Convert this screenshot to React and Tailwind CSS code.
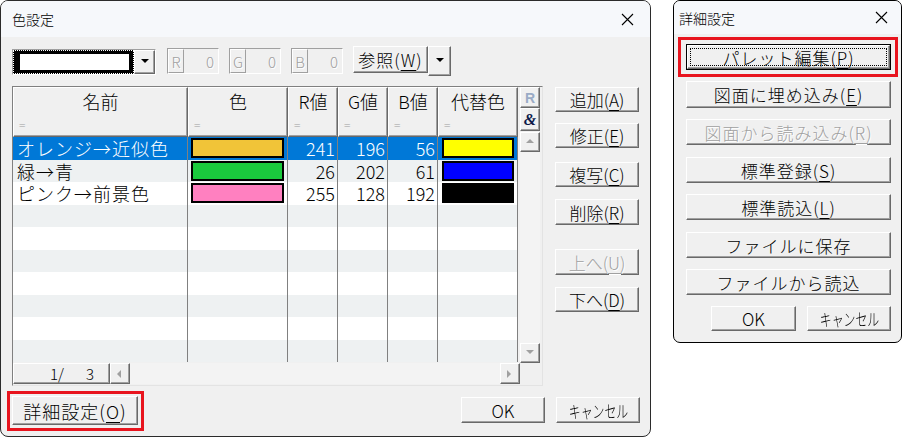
import React from "react";

const RAISED =
  "bg-[#f0f0f0] border border-t-white border-l-white border-r-[#696969] border-b-[#696969] shadow-[inset_-1px_-1px_0_#a0a0a0]";
const SUNKEN =
  "border border-t-[#a0a0a0] border-l-[#a0a0a0] border-r-white border-b-white";

const rows = [
  { name: "オレンジ→近似色", color: "#f1c438", r: 241, g: 196, b: 56, alt: "#ffff00", selected: true },
  { name: "緑→青", color: "#1aca3d", r: 26, g: 202, b: 61, alt: "#0000ff" },
  { name: "ピンク→前景色", color: "#ff80c0", r: 255, g: 128, b: 192, alt: "#000000" },
];

const emptyRows = [3, 4, 5, 6, 7, 8, 9];

function Btn({ children, className = "", disabled = false }) {
  return (
    <div
      className={`${RAISED} flex items-center justify-center text-[17px] leading-none whitespace-nowrap ${
        disabled ? "text-[#a0a0a0] [text-shadow:1px_1px_0_#ffffff]" : "text-black"
      } ${className}`}
    >
      {children}
    </div>
  );
}

function Key({ children }) {
  return <span className="underline underline-offset-[3px] decoration-1">{children}</span>;
}

// narrow katakana label like the original half-width font
function Cancel() {
  return <span className="inline-block scale-x-[0.7] text-[17px] leading-none">キャンセル</span>;
}

function CloseIcon() {
  return (
    <svg width="13" height="13" viewBox="0 0 13 13">
      <path d="M1 1 L12 12 M12 1 L1 12" stroke="#000" strokeWidth="1.1" fill="none" />
    </svg>
  );
}

function Arrow({ dir, color = "#a0a0a0" }) {
  const pts = {
    up: "0,5 4,1 8,5",
    down: "0,1 8,1 4,5",
    left: "5,0 5,8 1,4",
    right: "1,0 1,8 5,4",
  };
  return (
    <svg width="8" height="8" viewBox="0 0 8 8">
      <polygon points={pts[dir]} fill={color} />
    </svg>
  );
}

function HeadCell({ w, label }) {
  return (
    <div className={`${w} h-full ${RAISED} flex flex-col px-[5px]`}>
      <div className="h-[26px] flex items-center justify-center text-[18px] leading-none whitespace-nowrap">
        {label}
      </div>
      <div className="mt-[5px] text-[12px] leading-none text-[#a0a0a0]">=</div>
    </div>
  );
}

function RgbBox({ label }) {
  return (
    <div className={`${SUNKEN} w-[52px] h-[26px] flex items-center bg-[#f0f0f0]`}>
      <div className="w-[16px] h-full border border-t-white border-l-white border-r-[#a0a0a0] border-b-[#a0a0a0] flex items-center justify-center text-[15px] leading-none text-[#a0a0a0] [text-shadow:1px_1px_0_#ffffff]">
        {label}
      </div>
      <div className="flex-1 text-right pr-[4px] text-[15px] leading-none text-[#a0a0a0] [text-shadow:1px_1px_0_#ffffff]">
        0
      </div>
    </div>
  );
}

function DataRow({ row, index }) {
  const bg = row.selected ? "bg-[#0078d7] text-white" : index % 2 === 1 ? "bg-[#eef1f2]" : "bg-white";
  return (
    <div className={`flex h-[22.5px] ${bg}`}>
      <div className="w-[175px] border-r border-[#808080] pl-[4px] flex items-center text-[18px] leading-[18px] tracking-[1px] whitespace-nowrap">
        {row.name}
      </div>
      <div className="w-[100px] border-r border-[#808080] flex items-center pl-[3px]">
        <div className="w-[93px] h-[20px] border-2 border-black" style={{ background: row.color }} />
      </div>
      <div className="w-[50px] border-r border-[#808080] flex items-center justify-end pr-[2px] text-[18px] leading-[18px]">
        {row.r}
      </div>
      <div className="w-[50px] border-r border-[#808080] flex items-center justify-end pr-[2px] text-[18px] leading-[18px]">
        {row.g}
      </div>
      <div className="w-[50px] border-r border-[#808080] flex items-center justify-end pr-[2px] text-[18px] leading-[18px]">
        {row.b}
      </div>
      <div className="w-[80px] border-r border-[#808080] flex items-center pl-[4px]">
        <div className="w-[72px] h-[20px] border-2 border-black" style={{ background: row.alt }} />
      </div>
    </div>
  );
}

function EmptyRow({ index }) {
  const bg = index % 2 === 1 ? "bg-[#eef1f2]" : "bg-white";
  return (
    <div className={`flex h-[22.5px] ${bg}`}>
      <div className="w-[175px] border-r border-[#808080]" />
      <div className="w-[100px] border-r border-[#808080]" />
      <div className="w-[50px] border-r border-[#808080]" />
      <div className="w-[50px] border-r border-[#808080]" />
      <div className="w-[50px] border-r border-[#808080]" />
      <div className="w-[80px] border-r border-[#808080]" />
    </div>
  );
}

function MainDialog() {
  return (
    <div className="w-[651px] h-[437px] shrink-0 border border-[#2b2b2b] rounded-[8px] overflow-hidden bg-[#f0f0f0] flex flex-col">
      {/* Title bar */}
      <div className="h-[36px] bg-[#f6f8fb] flex items-center justify-between pl-[11px] pr-[16px]">
        <span className="text-[14px] leading-none">色設定</span>
        <CloseIcon />
      </div>

      <div className="pl-[11px] pr-[10px]">
        {/* Toolbar */}
        <div className="mt-[9px] h-[30px] flex items-start">
          <div className={`${SUNKEN} mt-[3px] w-[144px] h-[26px] flex items-stretch bg-white`}>
            <div className="w-[121px] bg-black border border-dotted border-white p-[3px] pl-[6px] pr-[4px]">
              <div className="w-full h-full bg-white" />
            </div>
            <div className={`${RAISED} flex-1 flex items-center justify-center`}>
              <Arrow dir="down" color="#000" />
            </div>
          </div>
          <div className="ml-[11px] mt-[2px]">
            <RgbBox label="R" />
          </div>
          <div className="ml-[10px] mt-[2px]">
            <RgbBox label="G" />
          </div>
          <div className="ml-[10px] mt-[2px]">
            <RgbBox label="B" />
          </div>
          <Btn className="ml-[10px] w-[75px] h-[27px] tracking-[1px]">
            参照(<Key>W</Key>)
          </Btn>
          <div className={`${RAISED} w-[23px] h-[30px] flex items-center justify-center`}>
            <Arrow dir="down" color="#000" />
          </div>
        </div>

        {/* Table + side buttons */}
        <div className="mt-[10px] flex items-start">
          <div className="w-[531px] h-[300px] border border-t-[#808080] border-l-[#808080] border-r-[#e3e3e3] border-b-[#e3e3e3] bg-[#f0f0f0] flex flex-col">
            <div className="flex h-[276px]">
              <div className="w-[507px] flex flex-col">
                <div className="flex h-[50px] w-[505px]">
                  <HeadCell w="w-[175px]" label="名前" />
                  <HeadCell w="w-[100px]" label="色" />
                  <HeadCell w="w-[50px]" label="R値" />
                  <HeadCell w="w-[50px]" label="G値" />
                  <HeadCell w="w-[50px]" label="B値" />
                  <HeadCell w="w-[80px]" label="代替色" />
                </div>
                <div className="w-[505px] flex flex-col">
                  {rows.map((row, i) => (
                    <DataRow key={i} row={row} index={i} />
                  ))}
                  {emptyRows.map((i) => (
                    <EmptyRow key={i} index={i} />
                  ))}
                </div>
              </div>
              <div className="w-[20px] flex flex-col">
                <div className={`${RAISED} h-[21px] flex items-center justify-center font-['Liberation_Sans',sans-serif] font-bold text-[14px] leading-none text-[#9aabc6]`}>
                  R
                </div>
                <div className={`${RAISED} h-[23px] flex items-center justify-center font-['Liberation_Serif',serif] font-bold italic text-[16px] leading-none text-[#0c1a4a]`}>
                  &amp;
                </div>
                <div className={`${RAISED} mt-[1px] h-[20px] flex items-center justify-center`}>
                  <Arrow dir="up" />
                </div>
                <div className="flex-1 bg-[#f3f3f3]" />
                <div className={`${RAISED} h-[20px] flex items-center justify-center`}>
                  <Arrow dir="down" />
                </div>
              </div>
            </div>
            <div className="flex h-[21px] w-[507px]">
              <div className={`${RAISED} w-[97px] flex items-center pl-[36px] text-[15px] leading-none`}>
                <span>1/</span>
                <span className="ml-[22px]">3</span>
              </div>
              <div className={`${RAISED} w-[20px] flex items-center justify-center`}>
                <Arrow dir="left" />
              </div>
              <div className="flex-1 bg-[#f3f3f3]" />
              <div className={`${RAISED} w-[20px] flex items-center justify-center`}>
                <Arrow dir="right" />
              </div>
            </div>
          </div>

          <div className="ml-[12px] w-[84px] flex flex-col">
            <Btn className="mt-[1px] h-[25px]">
              追加(<Key>A</Key>)
            </Btn>
            <Btn className="mt-[11px] h-[25px]">
              修正(<Key>E</Key>)
            </Btn>
            <Btn className="mt-[14px] h-[25px]">
              複写(<Key>C</Key>)
            </Btn>
            <Btn className="mt-[12px] h-[26px]">
              削除(<Key>R</Key>)
            </Btn>
            <Btn className="mt-[24px] h-[26px]" disabled>
              上へ(<Key>U</Key>)
            </Btn>
            <Btn className="mt-[12px] h-[25px]">
              下へ(<Key>D</Key>)
            </Btn>
          </div>
        </div>

        {/* Bottom buttons */}
        <div className="mt-[5px] flex items-center">
          <div className="-ml-[5px] border-[3px] border-[#e8141e] pt-[2px] pb-[3px] pl-[2px] pr-[3px]">
            <Btn className="w-[126px] h-[29px] text-[18px] tracking-[1px]">
              詳細設定(<Key>O</Key>)
            </Btn>
          </div>
          <div className="flex-1" />
          <Btn className="w-[84px] h-[26px] -mt-[2px]">OK</Btn>
          <Btn className="ml-[11px] w-[84px] h-[26px] -mt-[2px]">
            <Cancel />
          </Btn>
        </div>
      </div>
    </div>
  );
}

function DetailDialog() {
  return (
    <div className="ml-[22px] w-[229px] h-[343px] shrink-0 border border-black rounded-[7px] overflow-hidden bg-[#f0f0f0] flex flex-col">
      <div className="h-[33px] bg-[#f6f8fb] flex items-center justify-between pl-[5px] pr-[13px]">
        <span className="text-[14px] leading-none">詳細設定</span>
        <CloseIcon />
      </div>
      <div className="pl-[4px] pr-[2px] flex flex-col">
        <div className="mt-[3px] w-[220px] border-[3px] border-[#e8141e] pt-[4px] pb-[4px] pl-[5px] pr-[4px]">
          <div className="h-[26px] border border-black">
            <div className={`${RAISED} h-full p-[2px] border-t-white`}>
              <div className="h-full border border-dotted border-black flex items-center justify-center text-[17px] leading-none tracking-[1px]">
                パレット編集(<Key>P</Key>)
              </div>
            </div>
          </div>
        </div>
        <div className="pl-[8px] flex flex-col">
          <Btn className="mt-[4px] w-[205px] h-[27px] tracking-[1px]">
            図面に埋め込み(<Key>E</Key>)
          </Btn>
          <Btn className="mt-[11px] w-[205px] h-[26px] tracking-[1px]" disabled>
            図面から読み込み(<Key>R</Key>)
          </Btn>
          <Btn className="mt-[12px] w-[205px] h-[26px] tracking-[1px]">
            標準登録(<Key>S</Key>)
          </Btn>
          <Btn className="mt-[11px] w-[205px] h-[26px] tracking-[1px]">
            標準読込(<Key>L</Key>)
          </Btn>
          <Btn className="mt-[12px] w-[205px] h-[26px] tracking-[1px]">
            ファイルに保存
          </Btn>
          <Btn className="mt-[11px] w-[205px] h-[26px] tracking-[1px]">
            ファイルから読込
          </Btn>
          <div className="mt-[11px] flex">
            <Btn className="ml-[25px] w-[85px] h-[25px]">OK</Btn>
            <Btn className="ml-[11px] w-[84px] h-[25px]">
              <Cancel />
            </Btn>
          </div>
        </div>
      </div>
    </div>
  );
}

export default function App() {
  return (
    <div className="w-[903px] h-[439px] bg-white flex items-start font-['Noto_Sans_CJK_JP',sans-serif] font-light text-black">
      <MainDialog />
      <DetailDialog />
    </div>
  );
}
